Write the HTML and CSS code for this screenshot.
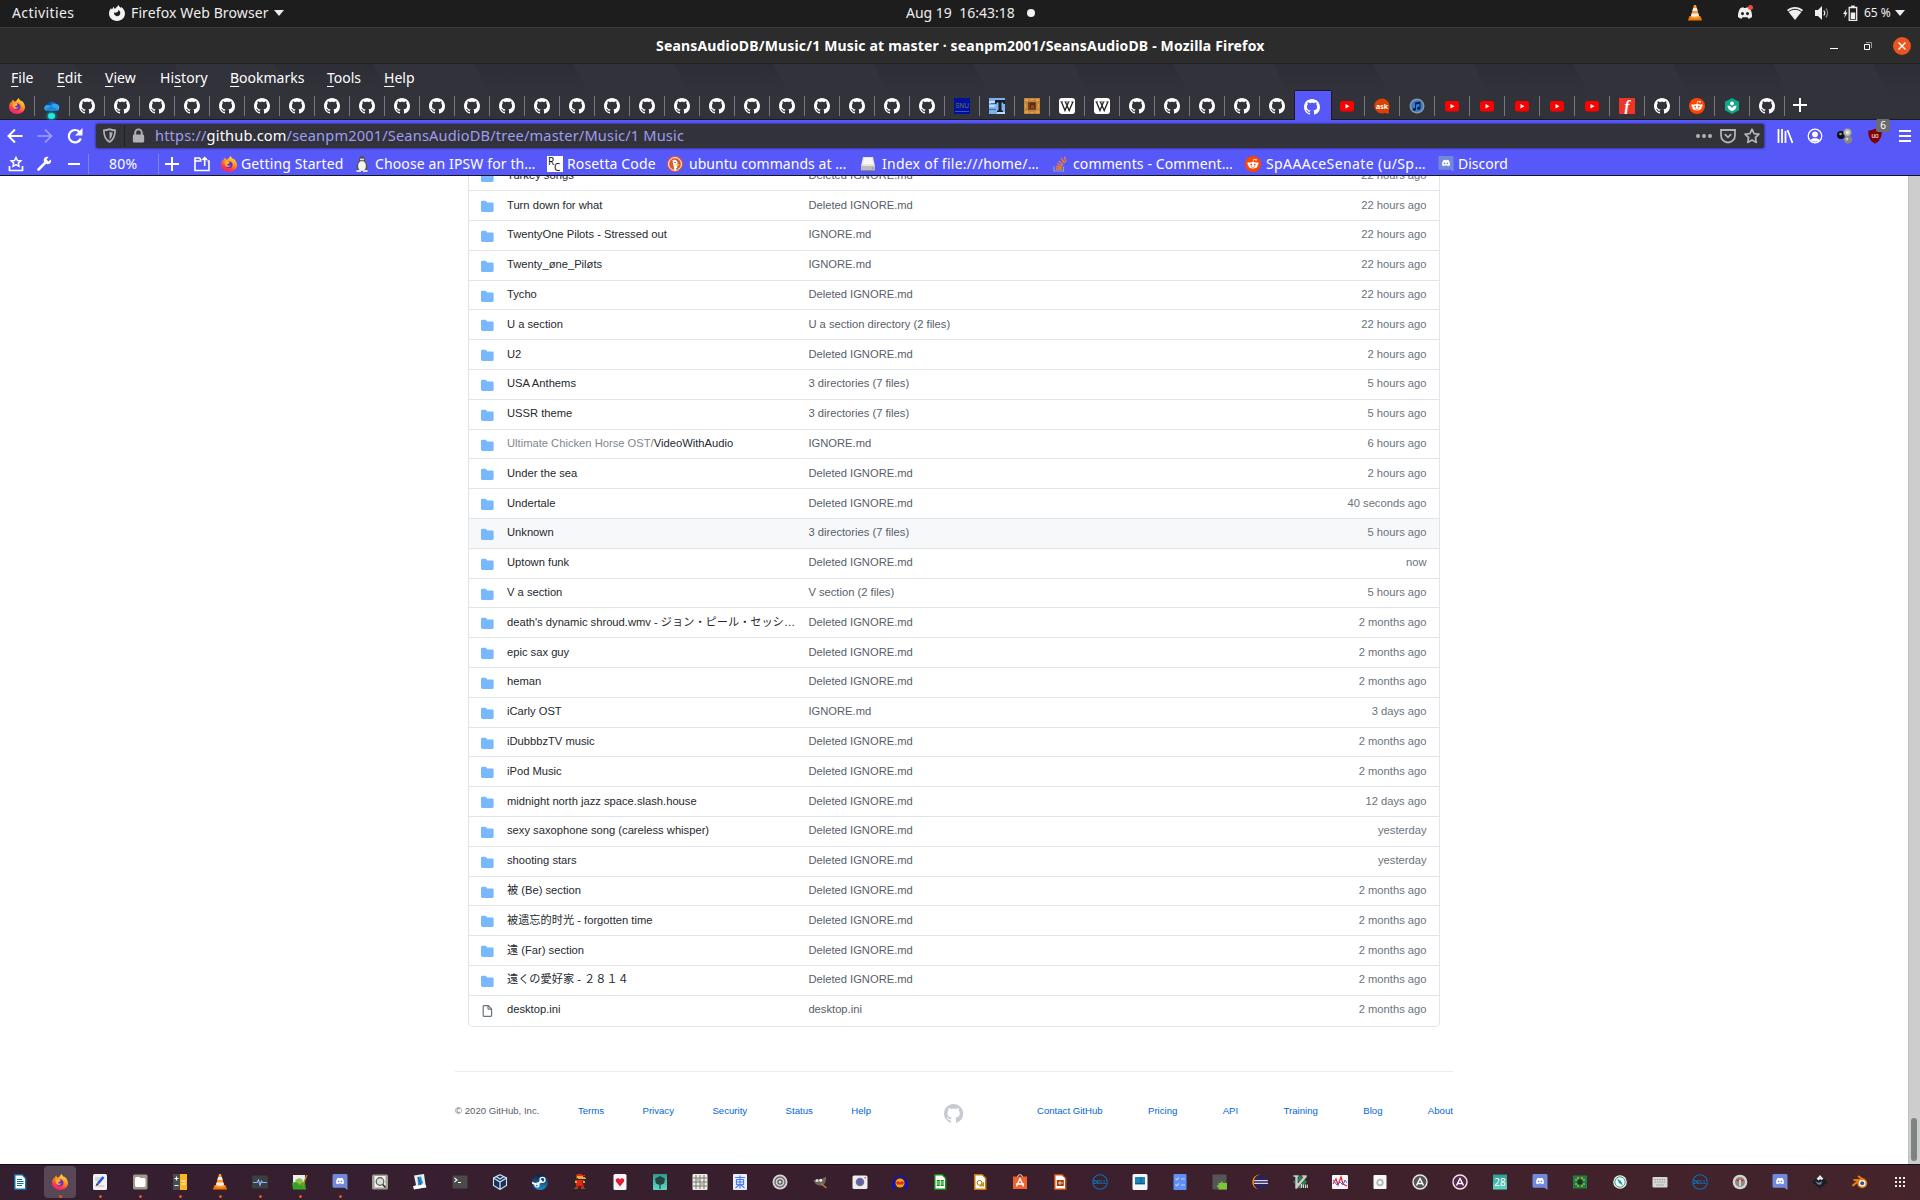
FILE: index.html
```html
<!DOCTYPE html>
<html lang="en">
<head>
<meta charset="utf-8">
<title>SeansAudioDB/Music/1 Music at master · seanpm2001/SeansAudioDB</title>
<link rel="stylesheet" href="styles.css">
</head>
<body>
<svg class="sprite" xmlns="http://www.w3.org/2000/svg">
<defs>
<linearGradient id="ffg" x1=".8" y1="0" x2=".3" y2="1"><stop offset="0" stop-color="#fff04a"/><stop offset=".4" stop-color="#ff9a1f"/><stop offset=".75" stop-color="#ff3a4a"/><stop offset="1" stop-color="#e0218a"/></linearGradient>
<linearGradient id="stg" x1="0" y1="0" x2="0" y2="1"><stop offset="0" stop-color="#101c3c"/><stop offset="1" stop-color="#1c8ad0"/></linearGradient>
<linearGradient id="teal" x1="0" y1="0" x2="0" y2="1"><stop offset="0" stop-color="#2f9a92"/><stop offset="1" stop-color="#5fd8c4"/></linearGradient>
<radialGradient id="ball"><stop offset="0" stop-color="#fff"/><stop offset="1" stop-color="#888"/></radialGradient>
</defs>
<symbol id="gh" viewBox="0 0 16 16"><path fill="currentColor" d="M8 0C3.58 0 0 3.58 0 8c0 3.54 2.29 6.53 5.47 7.59.4.07.55-.17.55-.38 0-.19-.01-.82-.01-1.49-2.01.37-2.53-.49-2.69-.94-.09-.23-.48-.94-.82-1.13-.28-.15-.68-.52-.01-.53.63-.01 1.08.58 1.23.82.72 1.21 1.87.87 2.33.66.07-.52.28-.87.51-1.07-1.78-.2-3.64-.89-3.64-3.95 0-.87.31-1.59.82-2.15-.08-.2-.36-1.02.08-2.12 0 0 .67-.21 2.2.82.64-.18 1.32-.27 2-.27.68 0 1.36.09 2 .27 1.53-1.04 2.2-.82 2.2-.82.44 1.1.16 1.92.08 2.12.51.56.82 1.27.82 2.15 0 3.07-1.87 3.75-3.65 3.95.29.25.54.73.54 1.48 0 1.07-.01 1.93-.01 2.2 0 .21.15.46.55.38A8.013 8.013 0 0016 8c0-4.42-3.58-8-8-8z"/></symbol>
<symbol id="dir" viewBox="0 0 16 16"><path fill="#79b8ff" d="M1.75 1A1.75 1.75 0 000 2.75v10.5C0 14.216.784 15 1.75 15h12.5A1.75 1.75 0 0016 13.25v-8.5A1.75 1.75 0 0014.25 3h-6.5a.25.25 0 01-.2-.1l-.9-1.2c-.33-.44-.85-.7-1.4-.7h-3.5z"/></symbol>
<symbol id="file" viewBox="0 0 16 16"><path fill="#6a737d" fill-rule="evenodd" d="M3.75 1.5a.25.25 0 00-.25.25v11.5c0 .138.112.25.25.25h8.5a.25.25 0 00.25-.25V6H9.75A1.75 1.75 0 018 4.25V1.5H3.75zm5.75.56v2.19c0 .138.112.25.25.25h2.19L9.5 2.06zM2 1.75C2 .784 2.784 0 3.75 0h5.086c.464 0 .909.184 1.237.513l3.414 3.414c.329.328.513.773.513 1.237v8.086A1.75 1.75 0 0112.25 15h-8.5A1.75 1.75 0 012 13.25V1.75z"/></symbol>
<symbol id="ff" viewBox="0 0 16 16"><path fill="url(#ffg)" d="M9.600 0c.6 1.700 2 2.400 2.700 3.500.1-.5 0-.8 0-1.100C14.500 4 16 6.300 16 9c0 4-3.400 7-8 7S0 12.900 0 9c0-1.900.700-3.700 1.800-5.100.1.500.2.700.4 1 .2-1.400 1.100-2.800 2.100-3.500 0 .9.300 1.500 1 2.100C7 3.600 8 2 9.600 0z"/><path fill="#6b2fc9" d="M8 5.200c2 0 3.600 1.600 3.600 3.500S10 12.200 8 12.200s-3.700-1.500-3.700-3.500c0-.5 0-.8.2-1.200L7 8l1.500-1.200z"/><path fill="#ffb52b" d="M3.800 5.600c1.200-.6 2.600-.3 3.600.5l1.200.6-1.500 1.200-1.200.6c.5 1.300 2.400 1.600 3.800.6-1 2.500-4.700 2.600-5.700 0-.5-1.200-.5-2.400-.2-3.500z"/></symbol>
<symbol id="ffsym" viewBox="0 0 16 16"><path fill="#f2f2f2" fill-rule="evenodd" d="M8 1.800 9.600 0c.3 1.600 1.600 1.900 2.300 3l.3-1C14.600 3.500 16 6 16 8.600 16 12.900 12.500 16 8 16S0 12.900 0 8.600C0 6.500.9 4.600 2 3.300L3 4.500 4.600 1.800 5.800 4zM5 7.600c-.2 2 1.200 3.600 3.100 3.600 1.900 0 3.200-1.400 3.200-3.200C11.300 6.500 10.400 5.400 9 5l.2 1.500L7 7.800z"/></symbol>
<symbol id="cloud" viewBox="0 0 16 16"><path fill="#1468bd" d="M4.500 8a4 4 0 0 1 7.400-2.300L9 9z"/><path fill="#0f4f9b" d="M3.800 5.500A4.300 4.300 0 0 1 8 3l-3 5H1.200c.3-1.400 1.300-2.300 2.600-2.500z"/><path fill="#30a5ea" d="M12.200 6a3.600 3.600 0 0 1 .6 7H3a3 3 0 0 1-1.700-5.300C3 6.500 5.500 7 6.700 7.700 8.500 6 10.500 5.500 12.200 6z"/><path fill="#1b87d6" d="M6.700 7.700 14.500 12c-.5.700-1.200 1-2 1H3a3 3 0 0 1-1.600-.6z"/></symbol>
<symbol id="yt" viewBox="0 0 16 16"><rect x="1" y="3" width="14" height="10.500" rx="2.500" fill="#f00"/><path fill="#fff" d="M6.500 6v4.400l4-2.200z"/></symbol>
<symbol id="snu" viewBox="0 0 16 16"><path fill="#0010a0" d="M0 0h16v16H0z"/><path fill="#3f55b4" d="M1 13h14v1H1z"/><text x="8" y="10" class="t6" fill="#6c7650" text-anchor="middle">SNU</text></symbol>
<symbol id="tvt" viewBox="0 0 16 16"><path fill="#7fb2ea" d="M0 0h16v16H0z"/><path fill="#b9dcff" d="M0 3h7v2H0zM0 7h6v2H0zM8 14h8v2H8z"/><path fill="#3c6ea5" d="M0 11h7v1H0zM2 5h4v1H2z"/><path fill="#1a1f2c" d="M6 2h10v4h-1.500l-.5-1.500h-1.500V12l1.500 1v1H8v-1l1.500-1V4.500H8L7 6H6z"/></symbol>
<symbol id="craft" viewBox="0 0 16 16"><path fill="#c4853b" d="M0 0h16v16H0z"/><path fill="#e0a552" d="M1 1h3v2H1zM12 1h3v2h-3zM6 1h4v1H6zM1 13h3v2H1zM12 13h3v2h-3zM6 14h4v1H6zM1 6h1v4H1zM14 6h1v4h-1z"/><path fill="#77431c" d="M4 4h8v8H4z"/><path fill="#5a2916" d="M6 5h5v5H6z"/><path fill="#8b4a25" d="M7 7h3v3H7z"/></symbol>
<symbol id="wiki" viewBox="0 0 16 16"><rect width="16" height="16" rx="3" fill="#fff"/><path stroke="#222" stroke-width="1.300" fill="none" d="M2.500 4 6 12.500 9.500 4M6.500 4l3.700 8.500L13.800 4"/><path stroke="#222" stroke-width=".7" d="M1.300 3.800h2.700M5.400 3.800h2.400M8.300 3.800h2.400M12.200 3.800h2.600"/></symbol>
<symbol id="ask" viewBox="0 0 16 16"><path fill="#db4200" d="M8 .5a7.500 7.500 0 0 1 7.500 7.500c0 2.500-1 4.500-.500 7.500-1.500.500-3.500-.500-4.500-.500A7.500 7.500 0 1 1 8 .5z"/><text x="8" y="10.500" class="t7" fill="#fff" text-anchor="middle">ask</text></symbol>
<symbol id="itunes" viewBox="0 0 16 16"><circle cx="8" cy="8" r="7.500" fill="#8d97a8"/><circle cx="8" cy="8" r="6" fill="#2f7fd0"/><path fill="#0c1c3a" d="M6 4.500 11.500 3.500v6.800a1.700 1.400 0 1 1-1-1.300V5.800L7 6.500v5a1.700 1.400 0 1 1-1-1.300z"/></symbol>
<symbol id="fbox" viewBox="0 0 16 16"><path fill="#ea3527" d="M0 0h16v16H0z"/><text x="8" y="13.500" class="tf" fill="#fff" text-anchor="middle">f</text></symbol>
<symbol id="reddit" viewBox="0 0 16 16"><circle cx="8" cy="8" r="8" fill="#ff4500"/><ellipse cx="8" cy="9.200" rx="4.600" ry="3.300" fill="#fff"/><circle cx="3.600" cy="7.500" r="1.200" fill="#fff"/><circle cx="12.400" cy="7.500" r="1.200" fill="#fff"/><circle cx="11" cy="3.800" r=".9" fill="#fff"/><path stroke="#fff" stroke-width=".7" fill="none" d="M8 6.200 8.600 3.300l2.200.4"/><circle cx="6.200" cy="8.600" r=".9" fill="#ff4500"/><circle cx="9.800" cy="8.600" r=".9" fill="#ff4500"/><path stroke="#ff4500" stroke-width=".7" fill="none" d="M6.200 10.700c1 .8 2.600.8 3.600 0"/></symbol>
<symbol id="hex" viewBox="0 0 16 16"><path fill="#0ea88a" d="m8 0 7 3.700v8.600L8 16l-7-3.700V3.700z"/><path fill="#fff" d="M8 13C5 12.500 3.700 10.500 3.500 7.500c2 0 3.500.8 4.500 2.500 1-1.700 2.500-2.500 4.500-2.500C12.300 10.500 11 12.500 8 13z"/><circle cx="8" cy="5.500" r="1.900" fill="#fff"/></symbol>
<symbol id="tux" viewBox="0 0 16 16"><path fill="#555" d="M8 0c2.300 0 3 1.800 3 4 0 1.700 2.500 3.500 2.500 7S12 15.500 8 15.500 2.500 14.500 2.500 11 5 5.700 5 4c0-2.200.7-4 3-4z"/><ellipse cx="8" cy="10" rx="3.900" ry="4.900" fill="#f5f5f5"/><circle cx="7" cy="3.300" r=".9" fill="#fff"/><circle cx="9" cy="3.300" r=".9" fill="#fff"/><path fill="#e9b93a" d="M6.500 4.700h3L8 6z"/><path fill="#ddd" d="M2.500 14h4.500v2H2.500zM9 14h4.500v2H9z"/></symbol>
<symbol id="rc" viewBox="0 0 16 16"><path fill="#fff" d="M0 0h16v16H0z"/><text x="1" y="9" class="trc" fill="#111">R</text><text x="7" y="15" class="trc" fill="#111">C</text></symbol>
<symbol id="ddg" viewBox="0 0 16 16"><circle cx="8" cy="8" r="8" fill="#de5833"/><circle cx="8" cy="8" r="6.400" fill="none" stroke="#fff" stroke-width="1"/><path fill="#fff" d="M5.500 4.500C7 3 10 3.500 10.500 6.500L10 14l-2.500.2z"/><path fill="#fdd20a" d="M8.500 8h3.500v1.500H8.800z"/><circle cx="8" cy="6.500" r=".7" fill="#2d4f8e"/><path fill="#65bc46" d="M9 12h2.500v1.700H9z"/></symbol>
<symbol id="disk" viewBox="0 0 16 16"><path fill="#e6e6e6" d="M3 1h10l2 9H1z"/><path fill="#bdbdbd" d="M1 10h14v4.500H1z"/><path fill="#f8f8f8" d="M4 2h8l1 6H3z"/><path fill="#888" d="M1 14h14v1H1z"/><circle cx="12.500" cy="12.300" r=".8" fill="#6a6"/></symbol>
<symbol id="so" viewBox="0 0 16 16"><path fill="none" stroke="#a0a0a8" stroke-width="1.200" d="M2 10.500v4.500h9.500v-4.500"/><path stroke="#f48024" stroke-width="1.400" d="M4 13h5.800M4.100 10.500l5.700 1M5 7.700l5.300 2.400M6.700 5l4.500 3.700M9.200 2.400l3.400 4.800M12.600.6l1.200 5.600"/></symbol>
<symbol id="face" viewBox="0 0 16 16"><path fill="currentColor" fill-rule="evenodd" d="M3.200 3.300C4.500 2.600 5.500 2.300 6.400 2.200l.5.900h2.200l.5-.9c.9.100 1.900.4 3.200 1.100C14.500 6 15.300 9 15 12c-1.200 1-2.500 1.500-3.600 1.800l-1-1.500H5.600l-1 1.500C3.500 13.500 2.200 13 1 12 .7 9 1.500 6 3.200 3.300zM5.500 7a1.500 1.600 0 1 0 0 3.200A1.500 1.600 0 0 0 5.500 7zm5 0a1.500 1.600 0 1 0 0 3.200 1.500 1.600 0 0 0 0-3.200z"/></symbol>
<symbol id="discord" viewBox="0 0 16 16"><path fill="#7289da" d="M2 0h12c1 0 1.500.6 1.500 1.500V16l-3-2.300H2C1 13.700.5 13 .5 12.200V1.500C.5.600 1 0 2 0z"/><use href="#face" x="3" y="2.500" width="10" height="9" color="#fff"/></symbol>
<symbol id="vlc" viewBox="0 0 16 16"><path fill="#f57900" d="M2.500 11h11L15 15.500H1z"/><path fill="#ff9a2e" d="M7 0h2l3.500 12.500c-2 1.400-7 1.400-9 0z"/><path fill="#eee" d="M6.200 3h3.600l.9 3H5.300zM4.600 8.500h6.800l.6 2.500c-2 1-6 1-8 0z"/></symbol>
<symbol id="wifi" viewBox="0 0 16 16"><path fill="#eee" d="M8 15 0 5c4.500-4 11.500-4 16 0z"/><path stroke="#1d1d1d" stroke-width="1" fill="none" d="M1.200 7C5 3.400 11 3.400 14.800 7"/></symbol>
<symbol id="vol" viewBox="0 0 16 16"><path fill="#eee" d="M1 5h3l4-4v14l-4-4H1z"/><path stroke="#eee" stroke-width="1.200" fill="none" d="M9.800 5.500c1.200 1.500 1.200 3.500 0 5"/><path stroke="#888" stroke-width="1.200" fill="none" d="M11.800 3.500c2.400 2.500 2.400 6.500 0 9"/></symbol>
<symbol id="batt" viewBox="0 0 16 16"><path fill="#eee" d="M3.500 4 0 9h2L1.300 13 4.500 7.500H2.700z"/><path stroke="#eee" stroke-width="1.300" fill="none" d="M6.200 2.500h7.500v12.800H6.200z"/><path fill="#eee" d="M8.200 .5h3.500v2H8.200zM7.700 7.500h4.500V14H7.700z"/></symbol>
<symbol id="texted" viewBox="0 0 16 16"><rect x="1" y="0" width="14" height="16" rx="1.500" fill="#f2f2f4"/><path stroke="#bbb" d="M3 4h6M3 6h4M3 12h9"/><path stroke="#2456d8" stroke-width="2.600" d="M6 9.500 11.500 3"/><path fill="#222" d="m3.800 12 1-3 2 1.600z"/></symbol>
<symbol id="files" viewBox="0 0 16 16"><rect x="1" y=".5" width="14.500" height="15" rx="1.500" fill="#a09a8a"/><path fill="#fff" d="M3 4.500a1.500 1.500 0 0 1 1.500-1.500H7l1.500 1H12a1.500 1.500 0 0 1 1.500 1.500v6A1.500 1.500 0 0 1 12 13H4.500A1.500 1.500 0 0 1 3 11.500z"/></symbol>
<symbol id="calc" viewBox="0 0 16 16"><path fill="#4c4c4c" d="M1 0h7v16H1z"/><path fill="#fbb71f" d="M8 0h7v16H8z"/><path stroke="#fff" stroke-width="1.200" d="M2.500 4.500h4M4.500 2.500v4M2.500 11.500h4M9.500 7h4M9.500 10h4"/></symbol>
<symbol id="mon" viewBox="0 0 16 16"><rect y="1.500" width="16" height="13" rx="1" fill="#3a3f42"/><path stroke="#8fb4f5" stroke-width="1.200" fill="none" d="M1 8.500h4l1.500-2.500 1.500 5 1.500-4 1 1.500H15"/></symbol>
<symbol id="npp" viewBox="0 0 16 16"><path fill="#eee" d="M1 1h12v10H1z"/><path fill="#3aa128" d="M0 9c4-2 10 0 13-1l1 7.500H1z"/><path fill="#8bc34a" d="M3 7c3-4 7-3 8 0l-3 4z"/><path stroke="#b98226" stroke-width="1.500" d="M15 1 10.500 12"/></symbol>
<symbol id="zoomi" viewBox="0 0 16 16"><rect y=".5" width="16" height="15" rx="1.500" fill="#a29d93"/><path fill="#f2f2ef" d="M2.500 2h11v11.500h-11z"/><circle cx="8" cy="7.500" r="3.800" fill="#ddd" stroke="#555" stroke-width="1.200"/><path stroke="#333" stroke-width="1.800" d="m10.700 10.500 2.800 3"/></symbol>
<symbol id="virtual" viewBox="0 0 16 16"><path fill="#e8eef2" d="m2 1.500 10-1.500 1.500 10.500 1 3L3.500 15 1 12.500l3-1.500z"/><path fill="#2a8fd0" d="M5.500 3 9 2.500 11 9l-3 2.500H6z"/><path fill="#fff" d="m1 12.500 12-2 1 2.500-12 2.500z"/><path stroke="#333" stroke-width=".7" d="m6 3 3 8"/></symbol>
<symbol id="term" viewBox="0 0 16 16"><rect x=".5" y="1.500" width="15" height="13" rx="1" fill="#4a4a48"/><path stroke="#fff" stroke-width="1.100" fill="none" d="m2.500 4 2.500 2-2.500 2M6 8.500h3"/></symbol>
<symbol id="vbox" viewBox="0 0 16 16"><path fill="#16335a" stroke="#cfe0f0" stroke-width="1.100" d="m8 .7 6.500 3.200v7.600L8 15.500l-6.500-4V3.900z"/><path stroke="#cfe0f0" stroke-width="1.300" fill="none" d="m1.500 4 6.500 4 6.500-4M8 8v7M4 2.500 8 5l4-2.500"/></symbol>
<symbol id="steam" viewBox="0 0 16 16"><circle cx="8" cy="8" r="8" fill="url(#stg)"/><path stroke="#fff" stroke-width="2.200" d="M4.500 11 10 6.500"/><circle cx="10.500" cy="5.800" r="2.500" fill="none" stroke="#fff" stroke-width="1.300"/><circle cx="5" cy="11" r="2" fill="none" stroke="#fff" stroke-width="1.200"/><path stroke="#fff" stroke-width="1.800" d="M0 8.500 4 10.500"/></symbol>
<symbol id="mario" viewBox="0 0 16 16"><path fill="#e02a12" d="M5 0h5v1h3v1H4V1h1zM5 6h5v3H5zM4 9h7v3H4z"/><path fill="#f2a33c" d="M5 2h6v1h2v1h1v1H6V4H5zM3 7h2v2H3zM11 7h2v2h-2z"/><path fill="#7c5a10" d="M4 2h1v3H4zM3 6h2v1H3zM10 6h2v1h-2zM3 13h3v2H2v-1h1zM9 13h3v1h1v1H9z"/><path fill="#d11" d="M4 11h3v2H4zM9 11h3v2H9z"/></symbol>
<symbol id="card" viewBox="0 0 16 16"><rect x="1.500" width="13" height="16" rx="1.500" fill="#f6f6f6"/><path fill="#e01b34" d="M8 12.500 4 7.500C3 5.500 5 3.500 7 4.500l1 1 1-1c2-1 4 1 3 3z"/></symbol>
<symbol id="tree" viewBox="0 0 16 16"><rect x="1" width="14" height="16" rx="1" fill="url(#teal)"/><path fill="#24443e" d="m8 2 5 2.500-1 5-4 1.500-4-1.500-1-5z"/><path stroke="#24443e" stroke-width="1.200" d="M8 9v6"/></symbol>
<symbol id="grid" viewBox="0 0 16 16"><rect x=".5" width="15" height="16" rx="1" fill="#ecebe4"/><path stroke="#77766e" stroke-width="1" d="M4 1v14M8 1v14M12 1v14M1 4h14M1 8h14M1 12h14"/><path fill="#bbb" d="M5 5h2v2H5zM9 9h2v2H9z"/></symbol>
<symbol id="kanji" viewBox="0 0 16 16"><rect x="1" width="14" height="16" rx="1" fill="#ebeef8"/><path stroke="#4a80f0" stroke-width="1.200" fill="none" d="M3 3.500h10M8 1.500v13M4.500 5.500h7v5h-7zM4.500 8h7M7.500 10.500l-4 3.500M8.500 10.500l4 3.500"/></symbol>
<symbol id="target" viewBox="0 0 16 16"><circle cx="8" cy="8" r="7.500" fill="#d5d5d5"/><circle cx="8" cy="8" r="5" fill="none" stroke="#666" stroke-width="1.300"/><circle cx="8" cy="8" r="2.200" fill="none" stroke="#555" stroke-width="1.200"/></symbol>
<symbol id="gimp" viewBox="0 0 16 16"><path fill="#6b675d" d="M1 6c2 1 3 0 5-.5S11 5 14 2.500c.5 3-.5 7-3 8.500s-7 0-8-2z"/><circle cx="5" cy="6.500" r="1.500" fill="#ddd"/><circle cx="8.700" cy="6.200" r="1.500" fill="#eee"/><path stroke="#c08340" stroke-width="1.300" d="m9 9.500 5.500 4.500"/></symbol>
<symbol id="cam" viewBox="0 0 16 16"><rect x=".5" y="1.500" width="15" height="13.500" rx="1.500" fill="#eeedf0"/><circle cx="8" cy="8" r="4.300" fill="#777"/><circle cx="8" cy="8" r="2.900" fill="#6259c0"/><circle cx="13.200" cy="3.800" r=".8" fill="#e33"/></symbol>
<symbol id="audac" viewBox="0 0 16 16"><path stroke="#1012c8" stroke-width="1.600" fill="none" d="M2 9C1 0 15 0 14 9"/><circle cx="8" cy="9" r="4.500" fill="#f3a21a"/><path fill="#e02d10" d="M4 8.500 6 7l2 1.500L10 7l2 1.500-1 2H5z"/><rect y="8" width="3" height="7" rx="1.500" fill="#1012c8"/><rect x="13" y="8" width="3" height="7" rx="1.500" fill="#1012c8"/></symbol>
<symbol id="doc" viewBox="0 0 16 16"><path fill="currentColor" d="M2 0h8.500L14.500 4v12H2z"/><path fill="#fff" d="M3.500 1.500H10L13 4.500v10H3.500z"/></symbol>
<symbol id="writer" viewBox="0 0 16 16"><use href="#doc" color="#15699c"/><path stroke="#15699c" stroke-width="1.100" d="M5 5.500h5M5 7.500h6.500M5 9.500h6.500M5 11.500h5"/></symbol>
<symbol id="sheet" viewBox="0 0 16 16"><use href="#doc" color="#158a18"/><path fill="#158a18" d="M4.800 6h7v6h-7z"/><path stroke="#fff" stroke-width=".7" d="M8.300 6v6M5 8h7M5 10h7"/></symbol>
<symbol id="draw" viewBox="0 0 16 16"><use href="#doc" color="#c9780c"/><circle cx="7.500" cy="8.800" r="2.400" fill="none" stroke="#b9690c"/><path fill="#c99310" d="m12 7.500-5 5h5z"/></symbol>
<symbol id="bag" viewBox="0 0 16 16"><path stroke="#eee" fill="none" stroke-width="1" d="M5.500 3c0-3 5-3 5 0"/><path fill="#f2622c" d="M1 2.500h14V15H1z"/><path stroke="#fff" stroke-width="1.300" fill="none" d="m4.500 12.500 3.500-8 3.500 8M4 10h8"/></symbol>
<symbol id="impress" viewBox="0 0 16 16"><use href="#doc" color="#c64a10"/><path fill="#a33b12" d="M4.800 6h7v6h-7z"/><path stroke="#fff" stroke-width=".7" d="M8 7v4M6 9h5"/></symbol>
<symbol id="dell" viewBox="0 0 16 16"><circle cx="8" cy="8" r="7.300" fill="none" stroke="#0b6fb3" stroke-width="1.100"/><text x="8" y="10" class="tdell" fill="#0b7cc7" text-anchor="middle">DELL</text></symbol>
<symbol id="shot" viewBox="0 0 16 16"><rect x=".5" width="15" height="16" rx="1.500" fill="#f7f7f7"/><path fill="#1c84bf" d="M3 3h10v7.500H3z"/><path stroke="#135a85" d="M9 3v7M3 9.500h10"/></symbol>
<symbol id="todo" viewBox="0 0 16 16"><rect x="1.500" width="13" height="16" rx="1" fill="#6090f4"/><path stroke="#bcd2ff" stroke-width="1.100" fill="none" d="m3.500 4.500 1.300 1.300L7 3.500M9 5h4M3.500 10.500l1.300 1.300L7 9.500M9 11h4"/></symbol>
<symbol id="puzzle" viewBox="0 0 16 16"><rect x=".5" y=".5" width="14" height="15" rx="1" fill="#565656"/><path fill="#7ac83a" d="M6.500 9H9c-.8-2 2.300-2 1.600 0H15v6.500H6.500v-2.300c-2 .6-2-2.500 0-2z"/></symbol>
<symbol id="eclipse" viewBox="0 0 16 16"><path fill="#f28c1e" d="M8 .5A7.500 7.500 0 0 0 6 15.300 8 8 0 0 1 8 .5z"/><circle cx="9" cy="8" r="7" fill="#2c2255"/><path fill="#d8d6e8" d="M2.300 6h13.500v1.300H2zM2 8.700h14V10H2.300z"/></symbol>
<symbol id="vim" viewBox="0 0 16 16"><path fill="#1f8a4c" d="m8 1 7 7-7 7-7-7z"/><path fill="#c9ccca" stroke="#333" stroke-width=".6" d="M1 1h6v2H6v6l5-6H9.500V1H15v2L5 15H3V3H1z"/><path stroke="#ddd" stroke-width="1.100" d="M9.500 10v4M11.500 10.500v3.500M13.500 10.500v3.500M15.300 10.500v3.500"/></symbol>
<symbol id="wave" viewBox="0 0 16 16"><rect y="1" width="16" height="14" rx="1" fill="#f8f6f8"/><path stroke="#e02030" stroke-width="1.200" fill="none" d="M1 10 4 5l2 6 3-8 2 7 4 2"/><path stroke="#4a62d8" fill="none" d="m1 6 4 5 3-3 3 3 2-5 2 3"/></symbol>
<symbol id="gearbox" viewBox="0 0 16 16"><rect x="1.500" y="1" width="13" height="14" rx="1" fill="#f7f7f7"/><circle cx="8" cy="8.500" r="2.800" fill="none" stroke="#b5b5b5" stroke-width="1.700"/></symbol>
<symbol id="acirc" viewBox="0 0 16 16"><circle cx="8" cy="8" r="7" fill="currentColor" stroke="#e6e6e6" stroke-width="1.500"/><path stroke="#fff" stroke-width="1.400" fill="none" d="m4.500 11.500 3.500-7 3.500 7M5 9.500h6"/></symbol>
<symbol id="cal" viewBox="0 0 16 16"><rect x="1" y=".5" width="14" height="15" fill="url(#teal)"/><text x="8" y="11.500" class="tcal" fill="#fff" text-anchor="middle">28</text></symbol>
<symbol id="chip" viewBox="0 0 16 16"><rect x="1" y="1.500" width="14" height="13" fill="#178048"/><path stroke="#f2c61c" stroke-width="1.100" d="M6 3v2.500M10 3v2.500M6 10.500v2.500M10 10.500v2.500M3 6h2.500M3 10h2.500M10.500 6h2.500M10.500 10h2.500"/><path fill="#1e3328" d="M5.500 5.500h5v5h-5z"/></symbol>
<symbol id="compass" viewBox="0 0 16 16"><circle cx="8" cy="8" r="6.800" fill="#f2f6f5"/><circle cx="8" cy="8" r="5.200" fill="none" stroke="#38a06a" stroke-width="1"/><path fill="#1ba0b0" d="m5 4.500 4 2.500 2 4.500L7 9z"/></symbol>
<symbol id="kbd" viewBox="0 0 16 16"><rect x=".5" y="3" width="15" height="10.500" rx="1" fill="#d6d6d2"/><path stroke="#999" stroke-dasharray="1.500 .8" d="M2.500 5.500h11M2.500 8h11"/><path stroke="#aaa" d="M4 11h8"/></symbol>
<symbol id="disc" viewBox="0 0 16 16"><circle cx="8" cy="8" r="7.300" fill="#d6d6d0"/><circle cx="8" cy="8" r="5" fill="#8a8a84"/><path fill="#ee2222" d="M4.500 5.500h2.500v1.500H4.500zM9 5.500h2.500v1.500H9z"/><path stroke="#fff" stroke-width="1.200" d="M8 6v6"/></symbol>
<symbol id="inkscape" viewBox="0 0 16 16"><path fill="#1b1e26" d="m8 .5 7.200 7.200c.8 1.300-1.200 2.300-3.200 2.600l1 1.700-3.500.5L8 15.500l-2-2.500-3-1 1.500-1.500C2 10 0 9 .8 7.700z"/><path fill="#e4e6ee" d="m8 1 3.500 3.700L9.500 6 8 5.200 6.500 6.500l-2-1.800z"/><path fill="#7989a4" d="m3 7 4 2 3-2-1 3.500H6z"/></symbol>
<symbol id="blender" viewBox="0 0 16 16"><path stroke="#ea7d12" stroke-width="2" fill="none" d="m6 2 5 3.500M1.500 6h8M.5 12 6 7"/><circle cx="10.200" cy="9.200" r="5" fill="#ea7d12"/><circle cx="10.200" cy="9.200" r="3.300" fill="#fff"/><circle cx="10.200" cy="9.200" r="2" fill="#265787"/></symbol>
<symbol id="apps" viewBox="0 0 16 16"><path fill="#eee" d="M3 3h2v2H3zM7 3h2v2H7zM11 3h2v2h-2zM3 7h2v2H3zM7 7h2v2H7zM11 7h2v2h-2zM3 11h2v2H3zM7 11h2v2H7zM11 11h2v2h-2z"/></symbol>
</svg>

<header class="topbar">
  <span class="activities">Activities</span>
  <svg class="ic"><use href="#ffsym"/></svg>
  <span class="appname">Firefox Web Browser</span><i class="caret"></i>
  <span class="clock">Aug 19&nbsp; 16:43:18</span><i class="dot"></i>
  <span class="tray">
    <svg class="ic t-vlc"><use href="#vlc"/></svg>
    <span class="t-disc"><svg class="ic"><use href="#face"/></svg><i class="badge-dot"></i></span>
    <svg class="ic t-wifi"><use href="#wifi"/></svg>
    <svg class="ic t-vol"><use href="#vol"/></svg>
    <svg class="ic t-batt"><use href="#batt"/></svg>
    <span class="pct">65 %</span><i class="caret"></i>
  </span>
</header>

<div class="titlebar">
  <b>SeansAudioDB/Music/1 Music at master · seanpm2001/SeansAudioDB - Mozilla Firefox</b>
  <span class="winbtns">
    <svg width="8" height="8" viewBox="0 0 8 8"><path fill="#fff" d="M0 6h8v1H0z"/></svg>
    <svg width="8" height="8" viewBox="0 0 8 8"><path fill="none" stroke="#fff" d="M.5 2.500h5v5h-5z"/><path fill="none" stroke="#999" d="M2 .5h5.500V6"/></svg>
    <svg width="18" height="18" viewBox="0 0 18 18"><circle cx="9" cy="9" r="9" fill="#e95420"/><path stroke="#fff" stroke-width="1.400" d="m5.500 5.500 7 7m0-7-7 7"/></svg>
  </span>
</div>

<div class="frame">
  <nav class="menubar">
    <span class="m1"><u>F</u>ile</span><span class="m2"><u>E</u>dit</span><span class="m3"><u>V</u>iew</span><span class="m4">Hi<u>s</u>tory</span><span class="m5"><u>B</u>ookmarks</span><span class="m6"><u>T</u>ools</span><span><u>H</u>elp</span>
  </nav>
  <div class="tabs">
    <span class="tab"><svg class="ic"><use href="#ff"/></svg></span>
    <span class="tab cloudtab"><svg class="ic"><use href="#cloud"/></svg></span>
    <span class="tab"><svg class="ic"><use href="#gh"/></svg></span>
    <span class="tab"><svg class="ic"><use href="#gh"/></svg></span>
    <span class="tab"><svg class="ic"><use href="#gh"/></svg></span>
    <span class="tab"><svg class="ic"><use href="#gh"/></svg></span>
    <span class="tab"><svg class="ic"><use href="#gh"/></svg></span>
    <span class="tab"><svg class="ic"><use href="#gh"/></svg></span>
    <span class="tab"><svg class="ic"><use href="#gh"/></svg></span>
    <span class="tab"><svg class="ic"><use href="#gh"/></svg></span>
    <span class="tab"><svg class="ic"><use href="#gh"/></svg></span>
    <span class="tab"><svg class="ic"><use href="#gh"/></svg></span>
    <span class="tab"><svg class="ic"><use href="#gh"/></svg></span>
    <span class="tab"><svg class="ic"><use href="#gh"/></svg></span>
    <span class="tab"><svg class="ic"><use href="#gh"/></svg></span>
    <span class="tab"><svg class="ic"><use href="#gh"/></svg></span>
    <span class="tab"><svg class="ic"><use href="#gh"/></svg></span>
    <span class="tab"><svg class="ic"><use href="#gh"/></svg></span>
    <span class="tab"><svg class="ic"><use href="#gh"/></svg></span>
    <span class="tab"><svg class="ic"><use href="#gh"/></svg></span>
    <span class="tab"><svg class="ic"><use href="#gh"/></svg></span>
    <span class="tab"><svg class="ic"><use href="#gh"/></svg></span>
    <span class="tab"><svg class="ic"><use href="#gh"/></svg></span>
    <span class="tab"><svg class="ic"><use href="#gh"/></svg></span>
    <span class="tab"><svg class="ic"><use href="#gh"/></svg></span>
    <span class="tab"><svg class="ic"><use href="#gh"/></svg></span>
    <span class="tab"><svg class="ic"><use href="#gh"/></svg></span>
    <span class="tab"><svg class="ic"><use href="#snu"/></svg></span>
    <span class="tab"><svg class="ic"><use href="#tvt"/></svg></span>
    <span class="tab"><svg class="ic"><use href="#craft"/></svg></span>
    <span class="tab"><svg class="ic"><use href="#wiki"/></svg></span>
    <span class="tab"><svg class="ic"><use href="#wiki"/></svg></span>
    <span class="tab"><svg class="ic"><use href="#gh"/></svg></span>
    <span class="tab"><svg class="ic"><use href="#gh"/></svg></span>
    <span class="tab"><svg class="ic"><use href="#gh"/></svg></span>
    <span class="tab"><svg class="ic"><use href="#gh"/></svg></span>
    <span class="tab before"><svg class="ic"><use href="#gh"/></svg></span>
    <span class="tab active"><svg class="ic"><use href="#gh"/></svg></span>
    <span class="tab"><svg class="ic"><use href="#yt"/></svg></span>
    <span class="tab"><svg class="ic"><use href="#ask"/></svg></span>
    <span class="tab"><svg class="ic"><use href="#itunes"/></svg></span>
    <span class="tab"><svg class="ic"><use href="#yt"/></svg></span>
    <span class="tab"><svg class="ic"><use href="#yt"/></svg></span>
    <span class="tab"><svg class="ic"><use href="#yt"/></svg></span>
    <span class="tab"><svg class="ic"><use href="#yt"/></svg></span>
    <span class="tab"><svg class="ic"><use href="#yt"/></svg></span>
    <span class="tab"><svg class="ic"><use href="#fbox"/></svg></span>
    <span class="tab"><svg class="ic"><use href="#gh"/></svg></span>
    <span class="tab"><svg class="ic"><use href="#reddit"/></svg></span>
    <span class="tab"><svg class="ic"><use href="#hex"/></svg></span>
    <span class="tab"><svg class="ic"><use href="#gh"/></svg></span>
    <svg class="newtab" viewBox="0 0 14 14"><path stroke="#fff" stroke-width="2" d="M0 7h14M7 0v14"/></svg>
  </div>
</div>

<div class="toolbar">
  <div class="navbtns">
    <svg class="ic" viewBox="0 0 16 16"><path fill="none" stroke="#fff" stroke-width="2" d="M15.500 8H1.500M8 1.500 1.500 8 8 14.500"/></svg>
    <svg class="ic faded" viewBox="0 0 16 16"><path fill="none" stroke="#fff" stroke-width="1.600" d="M.5 8h14M8 1.500 14.500 8 8 14.500"/></svg>
    <svg class="ic" viewBox="0 0 16 16"><path fill="none" stroke="#fff" stroke-width="2.200" d="M13.800 10.500A6.200 6.200 0 1 1 13 4.500"/><path fill="#fff" d="M15.500 0v7.500H8z"/></svg>
  </div>
  <div class="urlbar">
    <svg class="shield" viewBox="0 0 16 16"><path fill="none" stroke="#b1b1b5" stroke-width="1.800" d="M8 1.200c2 1 4 1.300 6 1.300C14 8 12.500 12.500 8 15 3.500 12.500 2 8 2 2.500c2 0 4-.3 6-1.300z"/><path fill="#b1b1b5" d="M8 4c1 .4 2 .7 3.300.8C11 8.500 10 10.800 8 12.300z"/></svg>
    <i class="usep"></i>
    <svg class="lock" viewBox="0 0 16 16"><rect x="2" y="7" width="12" height="8.500" rx="1.500" fill="#b1b1b5"/><path fill="none" stroke="#b1b1b5" stroke-width="2" d="M4.500 8V5a3.500 3.500 0 0 1 7 0v3"/></svg>
    <span class="url">https://<em>github.com</em>/seanpm2001/SeansAudioDB/tree/master/Music/1 Music</span>
    <span class="uicons">
      <svg class="ic" viewBox="0 0 16 16"><g fill="#b1b1b5"><circle cx="2" cy="8" r="2"/><circle cx="8" cy="8" r="2"/><circle cx="14" cy="8" r="2"/></g></svg>
      <svg class="ic" viewBox="0 0 16 16"><path fill="none" stroke="#b1b1b5" stroke-width="1.800" d="M1 2h14v5.500a7 7 0 0 1-14 0z"/><path fill="none" stroke="#b1b1b5" stroke-width="1.800" d="M4.800 6.200 8 9.300l3.200-3.100"/></svg>
      <svg class="ic" viewBox="0 0 16 16"><path fill="none" stroke="#b1b1b5" stroke-width="1.700" stroke-linejoin="round" d="m8 1.200 2.100 4.400 4.900.6-3.600 3.300.9 4.900L8 12l-4.300 2.400.9-4.900L1 6.200l4.900-.6z"/></svg>
    </span>
  </div>
  <div class="exticons">
    <svg class="ic" viewBox="0 0 16 16"><path stroke="#fff" stroke-width="1.800" d="M1.500 1v14M5 1v14M8.500 3v12M10.500 2l5 13"/></svg>
    <svg class="ic" viewBox="0 0 16 16"><circle cx="8" cy="8" r="6.800" fill="none" stroke="#fff" stroke-width="1.300"/><circle cx="8" cy="6.300" r="2.900" fill="#fff"/><path fill="#fff" d="M3.500 12c1-2.500 8-2.500 9 0-2 2.300-7 2.300-9 0z"/></svg>
    <svg class="ic" viewBox="0 0 16 16"><circle cx="4" cy="7" r="4" fill="#111"/><circle cx="3.500" cy="6" r="1.300" fill="#999"/><circle cx="11" cy="11.500" r="4.300" fill="#858585"/><circle cx="10.500" cy="4.500" r="4.300" fill="url(#ball)"/><circle cx="10" cy="11" r="1.500" fill="#ccc"/></svg>
    <span class="ublock"><svg class="ic" viewBox="0 0 16 16"><path fill="#800000" d="M8 .5C10 2 12 2.500 14.700 2.500 15 9 13 13 8 15.700 3 13 1 9 1.300 2.500 4 2.500 6 2 8 .5z"/><text x="8" y="10" class="t6" fill="#fff" text-anchor="middle">uo</text></svg><b class="count">6</b></span>
    <svg class="burger" viewBox="0 0 12 14"><path stroke="#fff" stroke-width="2" d="M0 2h12M0 7h12M0 12h12"/></svg>
  </div>
</div>

<div class="bookmarks">
  <div class="bmtools">
    <svg class="ic" viewBox="0 0 16 16"><path fill="none" stroke="#fff" stroke-width="1.500" d="m8 1.500 1.500 3 3.300.4-2.400 2.200.6 3.200-3-1.600-3 1.600.6-3.200-2.400-2.200 3.300-.4z"/><path fill="none" stroke="#fff" stroke-width="1.700" d="M1.500 10v4.500h13V10"/></svg>
    <svg class="ic" viewBox="0 0 16 16"><path stroke="#fff" stroke-width="2.600" stroke-linecap="round" d="M2.500 13.500 9 7"/><path fill="#fff" d="M14.800 3.500 12.500 5.500l-2-2 2-2.500C10 .2 7.500 2 7.700 4.600 8 7.500 11 9 13.500 7.800 15 7 15.500 5 14.800 3.500z"/></svg>
    <svg class="ic" viewBox="0 0 16 16"><path stroke="#fff" stroke-width="2" d="M2 8h12"/></svg>
    <span class="zoomv">80%</span>
    <svg class="ic" viewBox="0 0 16 16"><path stroke="#fff" stroke-width="2" d="M1 8h14M8 1v14"/></svg>
    <svg class="ic" viewBox="0 0 16 16"><path fill="none" stroke="#fff" stroke-width="1.600" d="M7.500 5H1V14.500h14V5h-1.500M1 5V2h4.500l1.500 2M10.700 10V2M8.300 4l2.400-2.400L13.100 4"/></svg>
  </div>
  <span class="bm b1"><svg class="ic"><use href="#ff"/></svg>Getting Started</span>
  <span class="bm b2"><svg class="ic"><use href="#tux"/></svg>Choose an IPSW for th…</span>
  <span class="bm b3"><svg class="ic"><use href="#rc"/></svg>Rosetta Code</span>
  <span class="bm b4"><svg class="ic"><use href="#ddg"/></svg>ubuntu commands at …</span>
  <span class="bm b5"><svg class="ic"><use href="#disk"/></svg>Index of file:///home/…</span>
  <span class="bm b6"><svg class="ic"><use href="#so"/></svg>comments - Comment…</span>
  <span class="bm b7"><svg class="ic"><use href="#reddit"/></svg>SpAAAceSenate (u/Sp…</span>
  <span class="bm b8"><svg class="ic"><use href="#discord"/></svg>Discord</span>
</div>

<main class="viewport">
  <div class="page">
    <div class="listing">
      <div class="row"><svg><use href="#dir"/></svg><a>Turkey songs</a><span>Deleted IGNORE.md</span><time>22 hours ago</time></div>
      <div class="row"><svg><use href="#dir"/></svg><a>Turn down for what</a><span>Deleted IGNORE.md</span><time>22 hours ago</time></div>
      <div class="row"><svg><use href="#dir"/></svg><a>TwentyOne Pilots - Stressed out</a><span>IGNORE.md</span><time>22 hours ago</time></div>
      <div class="row"><svg><use href="#dir"/></svg><a>Twenty_øne_Piløts</a><span>IGNORE.md</span><time>22 hours ago</time></div>
      <div class="row"><svg><use href="#dir"/></svg><a>Tycho</a><span>Deleted IGNORE.md</span><time>22 hours ago</time></div>
      <div class="row"><svg><use href="#dir"/></svg><a>U a section</a><span>U a section directory (2 files)</span><time>22 hours ago</time></div>
      <div class="row"><svg><use href="#dir"/></svg><a>U2</a><span>Deleted IGNORE.md</span><time>2 hours ago</time></div>
      <div class="row"><svg><use href="#dir"/></svg><a>USA Anthems</a><span>3 directories (7 files)</span><time>5 hours ago</time></div>
      <div class="row"><svg><use href="#dir"/></svg><a>USSR theme</a><span>3 directories (7 files)</span><time>5 hours ago</time></div>
      <div class="row"><svg><use href="#dir"/></svg><a><i>Ultimate Chicken Horse OST/</i>VideoWithAudio</a><span>IGNORE.md</span><time>6 hours ago</time></div>
      <div class="row"><svg><use href="#dir"/></svg><a>Under the sea</a><span>Deleted IGNORE.md</span><time>2 hours ago</time></div>
      <div class="row"><svg><use href="#dir"/></svg><a>Undertale</a><span>Deleted IGNORE.md</span><time>40 seconds ago</time></div>
      <div class="row hover"><svg><use href="#dir"/></svg><a>Unknown</a><span>3 directories (7 files)</span><time>5 hours ago</time></div>
      <div class="row"><svg><use href="#dir"/></svg><a>Uptown funk</a><span>Deleted IGNORE.md</span><time>now</time></div>
      <div class="row"><svg><use href="#dir"/></svg><a>V a section</a><span>V section (2 files)</span><time>5 hours ago</time></div>
      <div class="row"><svg><use href="#dir"/></svg><a>death's dynamic shroud.wmv - ジョン・ピール・セッシ…</a><span>Deleted IGNORE.md</span><time>2 months ago</time></div>
      <div class="row"><svg><use href="#dir"/></svg><a>epic sax guy</a><span>Deleted IGNORE.md</span><time>2 months ago</time></div>
      <div class="row"><svg><use href="#dir"/></svg><a>heman</a><span>Deleted IGNORE.md</span><time>2 months ago</time></div>
      <div class="row"><svg><use href="#dir"/></svg><a>iCarly OST</a><span>IGNORE.md</span><time>3 days ago</time></div>
      <div class="row"><svg><use href="#dir"/></svg><a>iDubbbzTV music</a><span>Deleted IGNORE.md</span><time>2 months ago</time></div>
      <div class="row"><svg><use href="#dir"/></svg><a>iPod Music</a><span>Deleted IGNORE.md</span><time>2 months ago</time></div>
      <div class="row"><svg><use href="#dir"/></svg><a>midnight north jazz space.slash.house</a><span>Deleted IGNORE.md</span><time>12 days ago</time></div>
      <div class="row"><svg><use href="#dir"/></svg><a>sexy saxophone song (careless whisper)</a><span>Deleted IGNORE.md</span><time>yesterday</time></div>
      <div class="row"><svg><use href="#dir"/></svg><a>shooting stars</a><span>Deleted IGNORE.md</span><time>yesterday</time></div>
      <div class="row"><svg><use href="#dir"/></svg><a>被 (Be) section</a><span>Deleted IGNORE.md</span><time>2 months ago</time></div>
      <div class="row"><svg><use href="#dir"/></svg><a lang="zh-CN">被遗忘的时光 - forgotten time</a><span>Deleted IGNORE.md</span><time>2 months ago</time></div>
      <div class="row"><svg><use href="#dir"/></svg><a>遠 (Far) section</a><span>Deleted IGNORE.md</span><time>2 months ago</time></div>
      <div class="row"><svg><use href="#dir"/></svg><a>遠くの愛好家 - ２８１４</a><span>Deleted IGNORE.md</span><time>2 months ago</time></div>
      <div class="row"><svg><use href="#file"/></svg><a>desktop.ini</a><span>desktop.ini</span><time>2 months ago</time></div>
    </div>
    <footer class="footer">
      <div class="links"><span>© 2020 GitHub, Inc.</span><a>Terms</a><a>Privacy</a><a>Security</a><a>Status</a><a>Help</a></div>
      <svg class="mark"><use href="#gh"/></svg>
      <div class="links"><a>Contact GitHub</a><a>Pricing</a><a>API</a><a>Training</a><a>Blog</a><a>About</a></div>
    </footer>
  </div>
  <div class="scroll"><i></i></div>
</main>

<div class="dock">
  <span><svg class="ic"><use href="#writer"/></svg></span>
  <span class="cur run"><svg class="ic"><use href="#ff"/></svg></span>
  <span class="run"><svg class="ic"><use href="#texted"/></svg></span>
  <span class="run"><svg class="ic"><use href="#files"/></svg></span>
  <span class="run"><svg class="ic"><use href="#calc"/></svg></span>
  <span class="run"><svg class="ic"><use href="#vlc"/></svg></span>
  <span class="run"><svg class="ic"><use href="#mon"/></svg></span>
  <span class="run"><svg class="ic"><use href="#npp"/></svg></span>
  <span class="run"><svg class="ic"><use href="#discord"/></svg></span>
  <span><svg class="ic"><use href="#zoomi"/></svg></span>
  <span><svg class="ic"><use href="#virtual"/></svg></span>
  <span><svg class="ic"><use href="#term"/></svg></span>
  <span><svg class="ic"><use href="#vbox"/></svg></span>
  <span><svg class="ic"><use href="#steam"/></svg></span>
  <span><svg class="ic"><use href="#mario"/></svg></span>
  <span><svg class="ic"><use href="#card"/></svg></span>
  <span><svg class="ic"><use href="#tree"/></svg></span>
  <span><svg class="ic"><use href="#grid"/></svg></span>
  <span><svg class="ic"><use href="#kanji"/></svg></span>
  <span><svg class="ic"><use href="#target"/></svg></span>
  <span><svg class="ic"><use href="#gimp"/></svg></span>
  <span><svg class="ic"><use href="#cam"/></svg></span>
  <span><svg class="ic"><use href="#audac"/></svg></span>
  <span><svg class="ic"><use href="#sheet"/></svg></span>
  <span><svg class="ic"><use href="#draw"/></svg></span>
  <span><svg class="ic"><use href="#bag"/></svg></span>
  <span><svg class="ic"><use href="#impress"/></svg></span>
  <span><svg class="ic"><use href="#dell"/></svg></span>
  <span><svg class="ic"><use href="#shot"/></svg></span>
  <span><svg class="ic"><use href="#todo"/></svg></span>
  <span><svg class="ic"><use href="#puzzle"/></svg></span>
  <span><svg class="ic"><use href="#eclipse"/></svg></span>
  <span><svg class="ic"><use href="#vim"/></svg></span>
  <span><svg class="ic"><use href="#wave"/></svg></span>
  <span><svg class="ic"><use href="#gearbox"/></svg></span>
  <span class="grey"><svg class="ic"><use href="#acirc"/></svg></span>
  <span class="plum"><svg class="ic"><use href="#acirc"/></svg></span>
  <span><svg class="ic"><use href="#cal"/></svg></span>
  <span><svg class="ic"><use href="#discord"/></svg></span>
  <span><svg class="ic"><use href="#chip"/></svg></span>
  <span><svg class="ic"><use href="#compass"/></svg></span>
  <span><svg class="ic"><use href="#kbd"/></svg></span>
  <span><svg class="ic"><use href="#dell"/></svg></span>
  <span><svg class="ic"><use href="#disc"/></svg></span>
  <span><svg class="ic"><use href="#discord"/></svg></span>
  <span><svg class="ic"><use href="#inkscape"/></svg></span>
  <span><svg class="ic"><use href="#blender"/></svg></span>
  <span><svg class="ic"><use href="#apps"/></svg></span>
</div>
</body>
</html>
```
FILE: styles.css
```css
* { box-sizing: border-box; }

body {
  margin: 0;
  width: 1920px;
  height: 1200px;
  overflow: hidden;
  display: flex;
  flex-direction: column;
  background: #fff;
  color: #fff;
  font: 14px/20px "Noto Sans", sans-serif;
  white-space: nowrap;
}

i, em { font-style: normal; }
.sprite { position: absolute; width: 0; height: 0; overflow: hidden; }
.ic { width: 16px; height: 16px; flex: none; display: block; overflow: visible; }

.t6 { font: 6.500px "Liberation Sans", sans-serif; }
.t7 { font: bold 7px "Noto Sans", sans-serif; }
.tf { font: italic bold 16px "Liberation Serif", serif; }
.trc { font: 10px "Noto Sans", sans-serif; }
.tdell { font: bold 5px "Liberation Sans", sans-serif; }
.tcal { font: 10px "Noto Sans", sans-serif; }

/* Desktop top bar */
.topbar {
  position: relative;
  height: 27px;
  flex: none;
  display: flex;
  align-items: center;
  padding: 0 0 1px 12px;
  background: #1d1d1d;
  color: #eee;
}
.activities { width: 97px; letter-spacing: .4px; }
.appname { margin-left: 6px; width: 143px; letter-spacing: .12px; }
.caret { border: 5px solid transparent; border-top: 6px solid #eee; border-bottom: 0; }
.clock { margin-left: 622px; width: 116px; }
.dot { width: 8px; height: 8px; border-radius: 50%; background: #f2f2f2; margin-left: 5px; }
.tray { display: flex; align-items: center; margin-left: 652px; color: #eee; }
.t-disc { position: relative; margin-left: 34px; }
.badge-dot { position: absolute; right: 0; top: 0; width: 5px; height: 5px; border-radius: 50%; background: #f04747; }
.t-wifi { margin-left: 34px; }
.t-vol { margin-left: 11px; }
.t-batt { margin-left: 13px; }
.pct { margin-left: 5px; width: 31px; font-size: 12px; }

/* Window title */
.titlebar {
  height: 37px;
  flex: none;
  display: flex;
  align-items: center;
  justify-content: flex-end;
  padding-right: 9px;
  border-top: 1px solid #3c3c3c;
  border-bottom: 1px solid #232323;
  background: #2c2c2c;
}
.titlebar b { width: 1174px; letter-spacing: .165px; }
.winbtns { display: flex; align-items: center; gap: 26px; }
.winbtns svg:last-child { margin-left: -5px; }

/* Menu and tabs */
.frame {
  height: 56px;
  flex: none;
  border-bottom: 1px solid #1c1b22;
  background:
    linear-gradient(180deg, rgba(50,50,60,0) 0, #32323a 32px),
    repeating-linear-gradient(65deg, #32323b 0, #32323b 90.6px, #2d2d35 90.6px, #2d2d35 181.200px);
}
.menubar { display: flex; height: 27px; align-items: center; padding-left: 11px; }
.menubar u { text-underline-offset: 3px; text-decoration-thickness: 1px; }
.m1 { width: 46px; } .m2 { width: 48px; } .m3 { width: 55px; } .m4 { width: 70px; letter-spacing: .1px; }
.m5 { width: 97px; } .m6 { width: 57px; }
.tabs { display: flex; height: 29px; }
.tab {
  position: relative;
  width: 35px;
  height: 28px;
  display: flex;
  align-items: center;
  justify-content: center;
  padding: 2px 1px 0 0;
}
.tab::after { content: ""; position: absolute; right: 0; top: 5px; width: 1px; height: 20px; background: #77777c; }
.tab.active { background: #5758f8; height: 29px; margin-right: -1px; width: 36px; padding-right: 2px; box-shadow: 0 -1px 0 #1c1b22, -1px 0 0 #1c1b22, 1px 0 0 #1c1b22; }
.tab.active::after, .tab.before::after { display: none; }
.cloudtab::before { content: ""; position: absolute; left: 13px; bottom: 0; width: 7px; height: 6px; border-radius: 50%; background: #25e6e6; box-shadow: 0 0 3px 1px #12a0a5; }
.newtab { width: 14px; height: 14px; margin: 7px 0 0 8px; }

/* Navigation toolbar */
.toolbar { height: 31px; flex: none; display: flex; align-items: center; background: #5758f8; padding: 0 9px 0 7px; }
.navbtns { display: flex; gap: 14px; width: 89px; }
.faded { opacity: .45; }
.urlbar {
  width: 1668px;
  height: 24px;
  display: flex;
  align-items: center;
  padding: 0 4px 0 6px;
  border-radius: 2px;
  background: #32323a;
  box-shadow: 0 0 2px 1px #3a3aa8;
}
.shield, .lock { width: 15px; height: 15px; }
.usep { width: 1px; height: 22px; background: #1f1f25; margin: 0 6px 0 7px; }
.url { margin-left: 9px; padding-bottom: 1px; font-size: 14.600px; letter-spacing: .16px; color: #9d9df2; }
.url em { color: #fff; }
.uicons { display: flex; gap: 8px; margin-left: auto; }
.exticons { display: flex; align-items: center; justify-content: space-between; flex: 1; padding-left: 13px; }
.ublock { position: relative; margin-right: 2px; }
.count {
  position: absolute;
  left: 9px;
  top: -9px;
  width: 14px;
  height: 13px;
  border-radius: 2px;
  background: #6b6b70;
  font: 10px/13px "Noto Sans", sans-serif;
  text-align: center;
}
.burger { width: 12px; height: 14px; }

/* Bookmarks toolbar */
.bookmarks { height: 25px; flex: none; display: flex; align-items: center; background: #5758f8; border-bottom: 1px solid #15151c; padding: 1px 0 0 8px; }
.bmtools { display: flex; align-items: center; width: 213px; }
.bmtools .ic:nth-child(2) { margin-left: 12px; }
.bmtools .ic:nth-child(3) { margin-left: 14px; }
.bmtools .ic:last-child { margin-left: 14px; }
.zoomv { width: 71px; height: 20px; margin: 0 5px 0 6px; padding-left: 20px; border: solid #7e7efa; border-width: 0 1px; line-height: 19px; letter-spacing: .2px; }
.bm { display: flex; align-items: center; gap: 5px; letter-spacing: .12px; }
.b1 { width: 133px; gap: 4px; } .b2 { width: 193px; } .b3 { width: 120px; gap: 4px; } .b4 { width: 193px; gap: 6px; letter-spacing: .05px; }
.b5 { width: 192px; gap: 6px; letter-spacing: .25px; } .b6 { width: 193px; } .b7 { width: 193px; letter-spacing: .4px; }
.b8 { gap: 4px; letter-spacing: 0; }

/* GitHub page */
.viewport { height: 988px; flex: none; display: flex; overflow: hidden; }
.page { width: 1908px; padding: 0 455px; font: 11.2px/16.8px "Liberation Sans", "Noto Sans CJK JP", sans-serif; }
.page a:lang(zh-CN) { font-family: "Liberation Sans", "Noto Sans CJK SC", sans-serif; }
.listing {
  width: 972px;
  margin: -15.600px 0 0 13px;
  border: 1px solid #e1e4e8;
  border-top: 0;
  border-radius: 0 0 5px 5px;
}
.row {
  height: 29.8px;
  display: grid;
  grid-template-columns: 12.8px 302px 1fr auto;
  align-items: center;
  padding: 0 12.5px 0 11.8px;
  border-top: 1px solid #e1e4e8;
  color: #586069;
}
.row:last-child { height: 31.5px; padding-bottom: 1.5px; }
.row svg { width: 12.8px; height: 12.8px; margin-top: 2px; }
.row a, .row span, .row time { padding-bottom: 1.2px; }
.row a { color: #24292e; margin-left: 13.400px; }
.row a i { color: #6a737d; opacity: .85; }
.row span { margin-left: 12.800px; }
.row time { color: #6a737d; }
.hover { background: #f6f8fa; }
.footer {
  width: 998px;
  margin-top: 44px;
  padding-top: 32px;
  border-top: 1px solid #eaecef;
  display: flex;
  justify-content: space-between;
  font-size: 9.6px;
  line-height: 14.4px;
  color: #586069;
}
.links { display: flex; justify-content: space-between; width: 416px; }
.footer a { color: #0366d6; }
.mark { width: 19.2px; height: 19.2px; color: #c6cbd1; }
.scroll { width: 12px; background: #cdcdcd; border-left: 1px solid #c0c0c0; }
.scroll i { display: block; width: 6px; height: 43px; border-radius: 3px; background: #7d8282; margin: 942px 0 0 2px; }

/* Dock */
.dock { flex: 1; display: flex; border-top: 1px solid #150d14; background: linear-gradient(90deg, #341f30, #3a1f2d 50%, #45242b); }
.dock span { position: relative; width: 40px; display: flex; align-items: center; justify-content: center; padding-bottom: 1px; }
.cur::before { content: ""; position: absolute; inset: 1px 4px 2px; border-radius: 4px; background: rgba(255,255,255,.18); }
.cur .ic { position: relative; }
.run::after { content: ""; position: absolute; left: 19px; bottom: 2px; width: 3px; height: 3px; border-radius: 50%; background: #e95420; }
.grey { color: #555; }
.plum { color: #5a2750; }
```
